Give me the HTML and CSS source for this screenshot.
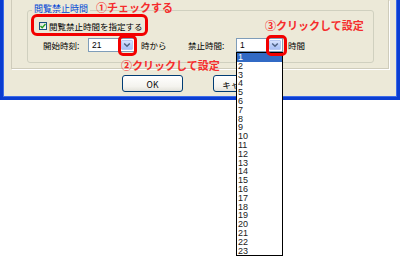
FILE: index.html
```html
<!DOCTYPE html>
<html lang="ja">
<head>
<meta charset="utf-8">
<link rel="stylesheet" href="styles.css">
</head>
<body>
<div class="window">
  <div class="panel">
    <div class="group">
      <span class="group-label">閲覧禁止時間</span>
      <div class="check-row">
        <span class="checkbox"><svg width="6" height="6" viewBox="0 0 6 6"><path d="M0.5 3 L2.2 4.8 L5.5 1" fill="none" stroke="#21A121" stroke-width="1.4"/></svg></span>
        <span class="check-label">閲覧禁止時間を指定する</span>
      </div>
      <div class="time-row">
        <span class="lbl lbl-start">開始時刻:</span>
        <span class="combo"><span class="combo-val">21</span><span class="combo-btn"><svg width="8" height="6" viewBox="0 0 8 6"><path d="M1.2 1.5 L4 4.3 L6.8 1.5" fill="none" stroke="#4D6185" stroke-width="1.5"/></svg></span></span>
        <span class="lbl lbl-from">時から</span>
        <span class="lbl lbl-ban">禁止時間:</span>
        <span class="combo"><span class="combo-val">1</span><span class="combo-btn"><svg width="8" height="6" viewBox="0 0 8 6"><path d="M1.2 1.5 L4 4.3 L6.8 1.5" fill="none" stroke="#4D6185" stroke-width="1.5"/></svg></span></span>
        <span class="lbl lbl-hours">時間</span>
      </div>
    </div>
  </div>
  <div class="buttons">
    <button class="btn">OK</button>
    <button class="btn btn-cancel">キャンセル</button>
  </div>
</div>

<ul class="droplist">
  <li class="sel">1</li><li>2</li><li>3</li><li>4</li><li>5</li><li>6</li><li>7</li><li>8</li><li>9</li><li>10</li><li>11</li><li>12</li><li>13</li><li>14</li><li>15</li><li>16</li><li>17</li><li>18</li><li>19</li><li>20</li><li>21</li><li>22</li><li>23</li>
</ul>

<div class="mark mark1"></div>
<div class="mark mark2"></div>
<div class="mark mark3"></div>
<div class="note note1">①チェックする</div>
<div class="note note2">②クリックして設定</div>
<div class="note note3">③クリックして設定</div>
</body>
</html>
```

FILE: styles.css
```css
* { box-sizing: border-box; }
html, body { margin: 0; padding: 0; }
body {
  width: 400px;
  height: 259px;
  background: #fff;
  position: relative;
  overflow: hidden;
  font-family: "Noto Sans CJK JP", "Liberation Sans", sans-serif;
  font-size: 8.5px;
  color: #000;
}
.window {
  width: 400px;
  height: 100px;
  background: #ECE9D8;
  border: 3px solid #0B3ED2;
  border-top: 0;
  border-left-color: #0A3CD0;
  padding: 0 8px 0 8px;
  box-shadow: inset 1px 0 0 #3D6BE8, inset -1px 0 0 #3D6BE8, inset 0 -1px 0 #3D6BE8;
}
.panel {
  height: 69px;
  border: 1px solid #CFCCBB;
  border-top: 0;
  box-shadow: 1px 1px 0 #fff;
  padding: 10px 0 0 15px;
}
.group {
  position: relative;
  width: 347px;
  height: 53px;
  border: 1px solid #D0D0BF;
  border-radius: 3px;
  padding: 10px 0 0 11px;
}
.group-label {
  position: absolute;
  left: 4px;
  top: -8px;
  padding: 0 2px;
  background: #ECE9D8;
  color: #0046D5;
  font-size: 9px;
  line-height: 11px;
}
.check-row {
  display: flex;
  align-items: center;
  height: 9px;
  gap: 2px;
}
.checkbox {
  width: 8px;
  height: 8px;
  border: 1px solid #1C5180;
  background: linear-gradient(135deg, #DCDCD7, #fff);
  display: flex;
  align-items: center;
  justify-content: center;
}
.checkbox svg { display: block; }
.check-label { line-height: 10px; }
.time-row {
  display: flex;
  align-items: center;
  height: 14px;
  margin-top: 8px;
  padding-left: 4px;
}
.lbl { line-height: 10px; white-space: nowrap; }
.lbl-start { width: 45px; }
.lbl-from { margin-left: 6px; width: 47px; }
.lbl-ban { width: 48px; }
.lbl-hours { margin-left: 5px; }
.combo {
  width: 47px;
  height: 14px;
  border: 1px solid #7F9DB9;
  background: #fff;
  display: flex;
  align-items: stretch;
  padding: 1px;
}
.combo-val {
  flex: 1;
  font-family: "Liberation Sans", sans-serif;
  font-size: 8.5px;
  line-height: 10px;
  padding-left: 2px;
}
.combo-btn {
  width: 12px;
  border: 1px solid #B8C8F2;
  border-radius: 1px;
  background: linear-gradient(180deg, #D6E1FD 0%, #B7CBF9 60%, #A9BFF5 100%);
  display: flex;
  align-items: center;
  justify-content: center;
}
.combo-btn svg { display: block; }
.buttons {
  display: flex;
  gap: 30px;
  margin-top: 6px;
  padding-left: 111px;
}
.btn {
  width: 61px;
  height: 17px;
  padding: 0;
  border: 1px solid #003C74;
  border-radius: 3px;
  background: linear-gradient(180deg, #FFFFFF 0%, #F4F3EE 70%, #E3E2DA 100%);
  font-family: "Noto Sans CJK JP", "Liberation Sans", sans-serif;
  font-size: 8.5px;
  line-height: 14px;
  color: #000;
}
.droplist {
  position: absolute;
  left: 236px;
  top: 52px;
  width: 47px;
  margin: 0;
  padding: 0;
  list-style: none;
  background: #fff;
  border: 1px solid #000;
  font-family: "Liberation Sans", sans-serif;
  font-size: 9px;
  color: #222;
}
.droplist li {
  height: 8.8px;
  line-height: 8.8px;
  padding-left: 1px;
}
.droplist li.sel {
  background: #316AC5;
  color: #fff;
}
.mark {
  position: absolute;
  border: 3px solid #F20000;
  border-radius: 6px;
}
.mark1 { left: 31px; top: 14px; width: 117px; height: 22px; }
.mark2 { left: 118px; top: 35px; width: 19px; height: 21px; border-radius: 5px; }
.mark3 { left: 266px; top: 35px; width: 21px; height: 21px; border-radius: 5px; }
.note {
  position: absolute;
  color: #F52C2C;
  font-family: "Noto Sans CJK JP", sans-serif;
  font-weight: 700;
  font-size: 11px;
  line-height: 14px;
  white-space: nowrap;
}
.note1 { left: 96px; top: 0px; }
.note2 { left: 121px; top: 58px; }
.note3 { left: 265px; top: 18px; }
```
